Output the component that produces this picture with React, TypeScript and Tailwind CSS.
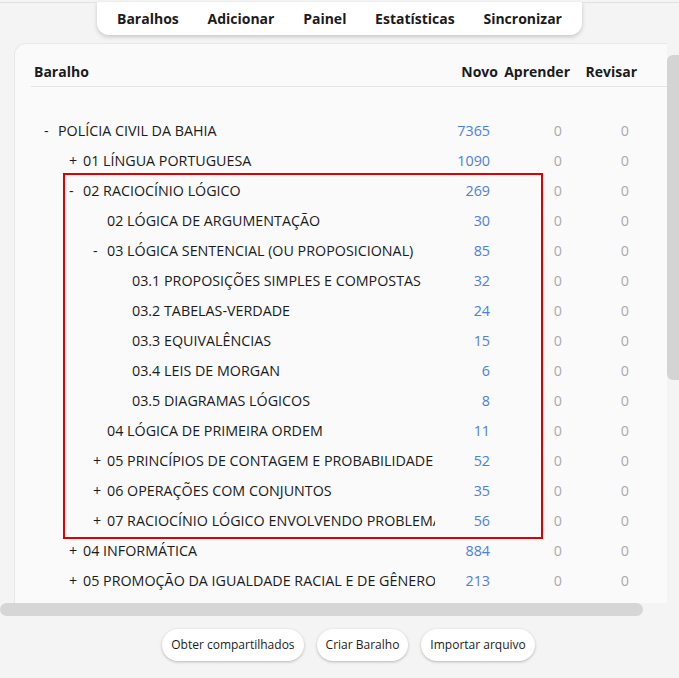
import React from "react";

type Row = { level: number; exp: string; name: string; n: number };

const rows: Row[] = [
  { level: 0, exp: "-", name: "POLÍCIA CIVIL DA BAHIA", n: 7365 },
  { level: 1, exp: "+", name: "01 LÍNGUA PORTUGUESA", n: 1090 },
  { level: 1, exp: "-", name: "02 RACIOCÍNIO LÓGICO", n: 269 },
  { level: 2, exp: "", name: "02 LÓGICA DE ARGUMENTAÇÃO", n: 30 },
  { level: 2, exp: "-", name: "03 LÓGICA SENTENCIAL (OU PROPOSICIONAL)", n: 85 },
  { level: 3, exp: "", name: "03.1 PROPOSIÇÕES SIMPLES E COMPOSTAS", n: 32 },
  { level: 3, exp: "", name: "03.2 TABELAS-VERDADE", n: 24 },
  { level: 3, exp: "", name: "03.3 EQUIVALÊNCIAS", n: 15 },
  { level: 3, exp: "", name: "03.4 LEIS DE MORGAN", n: 6 },
  { level: 3, exp: "", name: "03.5 DIAGRAMAS LÓGICOS", n: 8 },
  { level: 2, exp: "", name: "04 LÓGICA DE PRIMEIRA ORDEM", n: 11 },
  { level: 2, exp: "+", name: "05 PRINCÍPIOS DE CONTAGEM E PROBABILIDADE", n: 52 },
  { level: 2, exp: "+", name: "06 OPERAÇÕES COM CONJUNTOS", n: 35 },
  { level: 2, exp: "+", name: "07 RACIOCÍNIO LÓGICO ENVOLVENDO PROBLEMAS", n: 56 },
  { level: 1, exp: "+", name: "04 INFORMÁTICA", n: 884 },
  { level: 1, exp: "+", name: "05 PROMOÇÃO DA IGUALDADE RACIAL E DE GÊNERO", n: 213 },
];

const indent = ["pl-[13px]", "pl-[38px]", "pl-[62px]", "pl-[87px]"];

export default function App() {
  return (
    <div
      className="relative w-[679px] h-[678px] overflow-hidden bg-[#f4f4f4] text-[#1b1b1b] flex flex-col"
      style={{ fontFamily: '"Open Sans", "Noto Sans", sans-serif' }}
    >
      <div className="h-[3px] border-b border-[#e2e2e2] bg-[#f4f4f4]" />
      <div className="mx-auto -mt-px w-[485px] h-[33px] bg-white rounded-b-[12px] shadow-[0_2px_4px_rgba(0,0,0,0.18)] flex items-center justify-between px-[20px] text-[14px] font-bold">
        <span>Baralhos</span>
        <span>Adicionar</span>
        <span>Painel</span>
        <span>Estatísticas</span>
        <span>Sincronizar</span>
      </div>

      <div className="mt-[8px] flex">
        <div className="ml-[14px] w-[653px] h-[560px] bg-[#fafafa] rounded-tl-[12px] border-t border-l border-[#e8e8e8] overflow-hidden pt-[13px] pl-[16px]">
          <div className="flex h-[30px] items-center border-b border-[#e4e4e4] w-[640px] text-[14px] font-bold">
            <div className="w-[406px] pl-[3px]">Baralho</div>
            <div className="w-[61px] text-right">Novo</div>
            <div className="w-[72px] text-right">Aprender</div>
            <div className="w-[67px] text-right">Revisar</div>
          </div>
          <div className="h-[29px]" />
          {rows.map((r, i) => (
            <div key={i} className="flex h-[30px] items-center text-[14.3px]">
              <div className={`w-[404px] overflow-hidden whitespace-nowrap flex ${indent[r.level]}`}>
                <span className="w-[14px] shrink-0">{r.exp}</span>
                <span>{r.name}</span>
              </div>
              <div className="w-[63px] text-right pr-[8px] text-[#4f7fd8]">{r.n}</div>
              <div className="w-[72px] text-right pr-[8px] text-[#ababab]">0</div>
              <div className="w-[67px] text-right pr-[8px] text-[#ababab]">0</div>
            </div>
          ))}
        </div>
        <div className="w-[12px] pt-[12px]">
          <div className="h-[325px] w-[12px] rounded-l-[6px] bg-[#d4d4d4]" />
        </div>
      </div>

      <div className="h-[13px] w-[643px] rounded-full bg-[#d6d6d6]" />

      <div className="mt-[13px] flex justify-center gap-[13px] pl-[18px] text-[12px]">
        <button className="h-[32px] px-[9px] rounded-full bg-white shadow-[0_1px_3px_rgba(0,0,0,0.25)]">
          Obter compartilhados
        </button>
        <button className="h-[32px] px-[9px] rounded-full bg-white shadow-[0_1px_3px_rgba(0,0,0,0.25)]">
          Criar Baralho
        </button>
        <button className="h-[32px] px-[9px] rounded-full bg-white shadow-[0_1px_3px_rgba(0,0,0,0.25)]">
          Importar arquivo
        </button>
      </div>

      <div className="absolute left-[63px] top-[173px] w-[480px] h-[366px] border-[2.5px] border-[#e00000] pointer-events-none" />
    </div>
  );
}
